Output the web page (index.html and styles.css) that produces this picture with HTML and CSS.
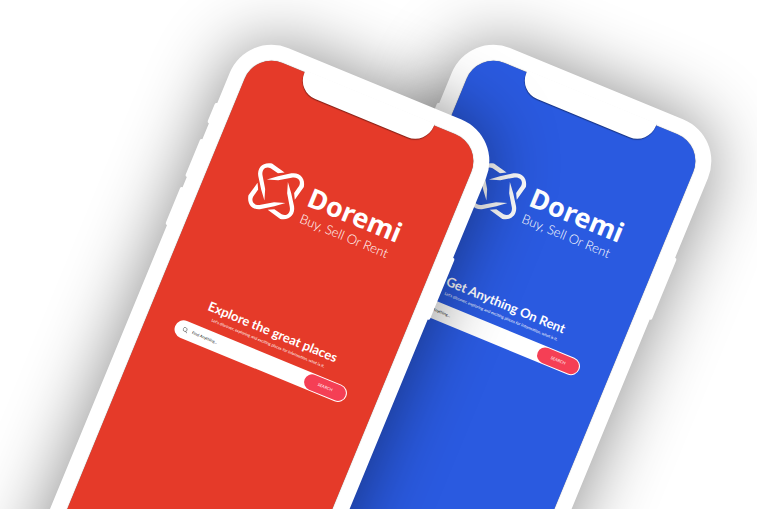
FILE: index.html
```html
<!DOCTYPE html>
<html lang="en">
<head>
<meta charset="utf-8">
<title>Doremi</title>
<link rel="stylesheet" href="styles.css">
</head>
<body>
<svg width="0" height="0" class="defs" aria-hidden="true">
  <defs>
    <path id="arm" d="M-35 28 L-45 -5 L-54 -45 C-58 -71 -40 -88 -13 -83 L25 -56 L5 -54 L-17 -69 C-32 -76 -45 -65 -41 -46 L-33 -6 Z"/>
    <symbol id="knot" viewBox="-90 -90 180 180">
      <g transform="rotate(-22)">
        <use href="#arm"/>
        <use href="#arm" transform="rotate(90)"/>
        <use href="#arm" transform="rotate(180)"/>
        <use href="#arm" transform="rotate(270)"/>
      </g>
    </symbol>
    <symbol id="lens" viewBox="0 0 12 12">
      <circle cx="5" cy="5" r="4"/>
      <path d="M8 8 L11 11"/>
    </symbol>
  </defs>
</svg>
<main class="stage">
  <section class="phone phone-blue">
    <i class="key key-mute"></i><i class="key key-up"></i><i class="key key-down"></i><i class="key key-power"></i>
    <div class="screen">
      <div class="notch"></div>
      <header class="brand">
        <svg class="mark"><use href="#knot"/></svg>
        <div class="words">
          <div class="name">Doremi</div>
          <div class="tagline">Buy, Sell Or Rent</div>
        </div>
      </header>
      <h2 class="title">Get Anything On Rent</h2>
      <p class="lead">Let's discover, exploring and exciting places for information, what is it.</p>
      <form class="search">
        <svg class="lens"><use href="#lens"/></svg>
        <input type="text" aria-label="Search rentals" placeholder="Find Anything...">
        <button type="button">SEARCH</button>
      </form>
    </div>
  </section>
  <section class="phone phone-red">
    <i class="key key-mute"></i><i class="key key-up"></i><i class="key key-down"></i><i class="key key-power"></i>
    <div class="screen">
      <div class="notch"></div>
      <header class="brand">
        <svg class="mark"><use href="#knot"/></svg>
        <div class="words">
          <div class="name">Doremi</div>
          <div class="tagline">Buy, Sell Or Rent</div>
        </div>
      </header>
      <h2 class="title">Explore the great places</h2>
      <p class="lead">Let's discover, exploring and exciting places for information, what is it.</p>
      <form class="search">
        <svg class="lens"><use href="#lens"/></svg>
        <input type="text" aria-label="Search places" placeholder="Find Anything...">
        <button type="button">SEARCH</button>
      </form>
    </div>
  </section>
</main>
</body>
</html>
```
FILE: styles.css
```css
* { box-sizing: border-box; }
body { margin: 0; background: #fff; font-family: Lato, "Liberation Sans", sans-serif; }
.defs { position: absolute; }
.stage { position: relative; min-height: 100vh; overflow: hidden; }

.phone {
  position: absolute;
  top: 31px;
  width: 277px;
  height: 620px;
  padding: 16px;
  border-radius: 45px;
  background: #fff;
  box-shadow: 0 0 70px rgba(0, 0, 0, .46);
  transform: rotate(22.4deg);
  transform-origin: 0 0;
}
.phone-red { left: 247px; --screen: #e53a29; --gap: 93px; }
.phone-blue { left: 469px; --screen: #2a5ae0; --gap: 64px; }

.key { position: absolute; left: -2px; width: 6px; border-radius: 2px; background: #fff; }
.key-mute { top: 78px; height: 22px; }
.key-up { top: 117px; height: 41px; }
.key-down { top: 169px; height: 41px; }
.key-power { left: auto; right: -2px; top: 131px; height: 67px; }

.screen {
  display: flex;
  flex-direction: column;
  align-items: center;
  height: 100%;
  border-radius: 29px;
  background: var(--screen);
  box-shadow: 0 0 1px rgba(0, 0, 0, .6);
  color: #fff;
}
.notch {
  width: 140px;
  height: 23px;
  margin-top: -2px;
  border-radius: 0 0 20px 20px;
  background: #fff;
  box-shadow: 0 1px 1px rgba(0, 0, 0, .4);
  clip-path: inset(0 -2px -2px -2px);
}
.brand { display: flex; align-items: center; gap: 3px; margin-top: 70px; }
.mark { width: 60px; height: 60px; fill: #fff; }
.name { font: 700 27px/30px "Noto Sans", sans-serif; }
.tagline { font-size: 13px; line-height: 16px; font-weight: 300; }
.title { margin: var(--gap) 0 0; font-size: 13px; line-height: 16px; font-weight: 700; white-space: nowrap; }
.lead { margin: 2px 0 0; font-size: 4px; line-height: 6px; white-space: nowrap; }
.search {
  display: flex;
  align-items: center;
  gap: 4px;
  width: 185px;
  height: 18px;
  margin-top: 7px;
  padding: 1px 1px 1px 8px;
  border-radius: 9px;
  background: #fff;
}
.lens { width: 6px; height: 6px; fill: none; stroke: #333; stroke-width: 1px; }
.search input { flex: 1; min-width: 0; padding: 0; border: 0; background: none; font: 4px/6px Lato, sans-serif; color: #222; }
.search input::placeholder { color: #222; }
.search button { width: 44px; height: 16px; padding: 0; border: 0; border-radius: 8px; background: #f53f55; color: #fff; font: 4px/6px Lato, sans-serif; }
```
